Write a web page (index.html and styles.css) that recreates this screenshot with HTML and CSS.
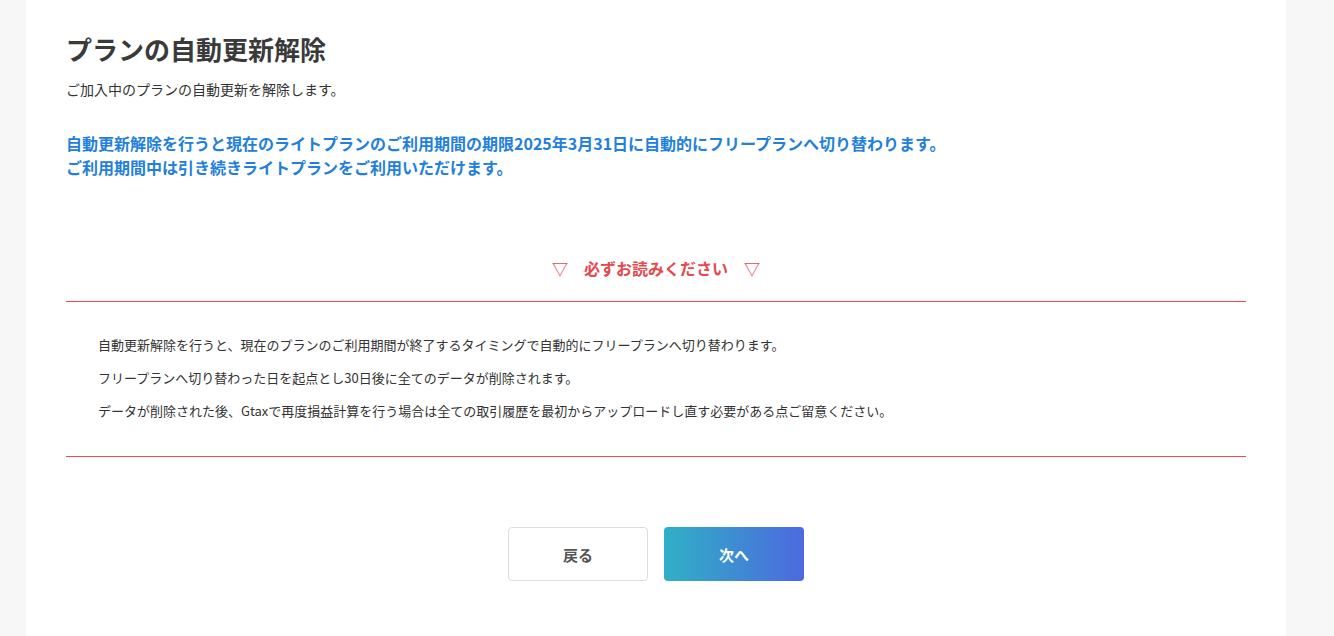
FILE: index.html
```html
<!DOCTYPE html>
<html lang="ja">
<head>
<meta charset="utf-8">
<title>プランの自動更新解除</title>
<link rel="stylesheet" href="styles.css">
</head>
<body>
<div class="page">
  <main class="panel">
    <h1 class="title">プランの自動更新解除</h1>
    <p class="lead">ご加入中のプランの自動更新を解除します。</p>
    <p class="notice">自動更新解除を行うと現在のライトプランのご利用期間の期限2025年3月31日に自動的にフリープランへ切り替わります。<br>ご利用期間中は引き続きライトプランをご利用いただけます。</p>
    <h2 class="warn-title">▽　必ずお読みください　▽</h2>
    <div class="warn-box">
      <p>自動更新解除を行うと、現在のプランのご利用期間が終了するタイミングで自動的にフリープランへ切り替わります。</p>
      <p>フリープランへ切り替わった日を起点とし30日後に全てのデータが削除されます。</p>
      <p>データが削除された後、Gtaxで再度損益計算を行う場合は全ての取引履歴を最初からアップロードし直す必要がある点ご留意ください。</p>
    </div>
    <div class="actions">
      <button class="btn btn-back" type="button">戻る</button>
      <button class="btn btn-next" type="button">次へ</button>
    </div>
  </main>
</div>
</body>
</html>
```
FILE: styles.css
```css
html, body {
  margin: 0;
  padding: 0;
  background: #f7f7f7;
  font-family: "Noto Sans CJK JP", "Noto Sans", sans-serif;
  color: #333;
}
.page {
  padding: 0 48px 0 26px;
}
.panel {
  background: #fff;
  width: 1260px;
  min-height: 636px;
  box-sizing: border-box;
  padding: 30px 40px 40px;
}
.title {
  margin: 0;
  font-size: 26px;
  line-height: 38px;
  font-weight: 700;
  color: #3a3a3a;
}
.lead {
  margin: 11px 0 0;
  font-size: 14px;
  line-height: 20px;
  color: #333;
}
.notice {
  margin: 32px 0 0;
  font-size: 16px;
  line-height: 24px;
  font-weight: 700;
  color: #2280dc;
}
.warn-title {
  margin: 77px 0 0;
  text-align: center;
  font-size: 16px;
  line-height: 24px;
  font-weight: 700;
  color: #e5484d;
  padding-bottom: 21px;
}
.warn-box {
  border-top: 1px solid #f04a4a;
  border-bottom: 1px solid #f04a4a;
  padding: 33px 32px 35px;
}
.warn-box p {
  margin: 0;
  font-size: 13px;
  line-height: 20px;
  color: #333;
}
.warn-box p + p {
  margin-top: 13px;
}
.actions {
  margin-top: 70px;
  display: flex;
  justify-content: center;
  gap: 16px;
}
.btn {
  width: 140px;
  height: 54px;
  border-radius: 4px;
  font-family: inherit;
  font-size: 15px;
  font-weight: 700;
  cursor: pointer;
}
.btn-back {
  background: #fff;
  border: 1px solid #dcdce3;
  color: #555;
}
.btn-next {
  border: none;
  color: #fff;
  background: linear-gradient(90deg, #30b0c6 0%, #4c69df 100%);
}
```
